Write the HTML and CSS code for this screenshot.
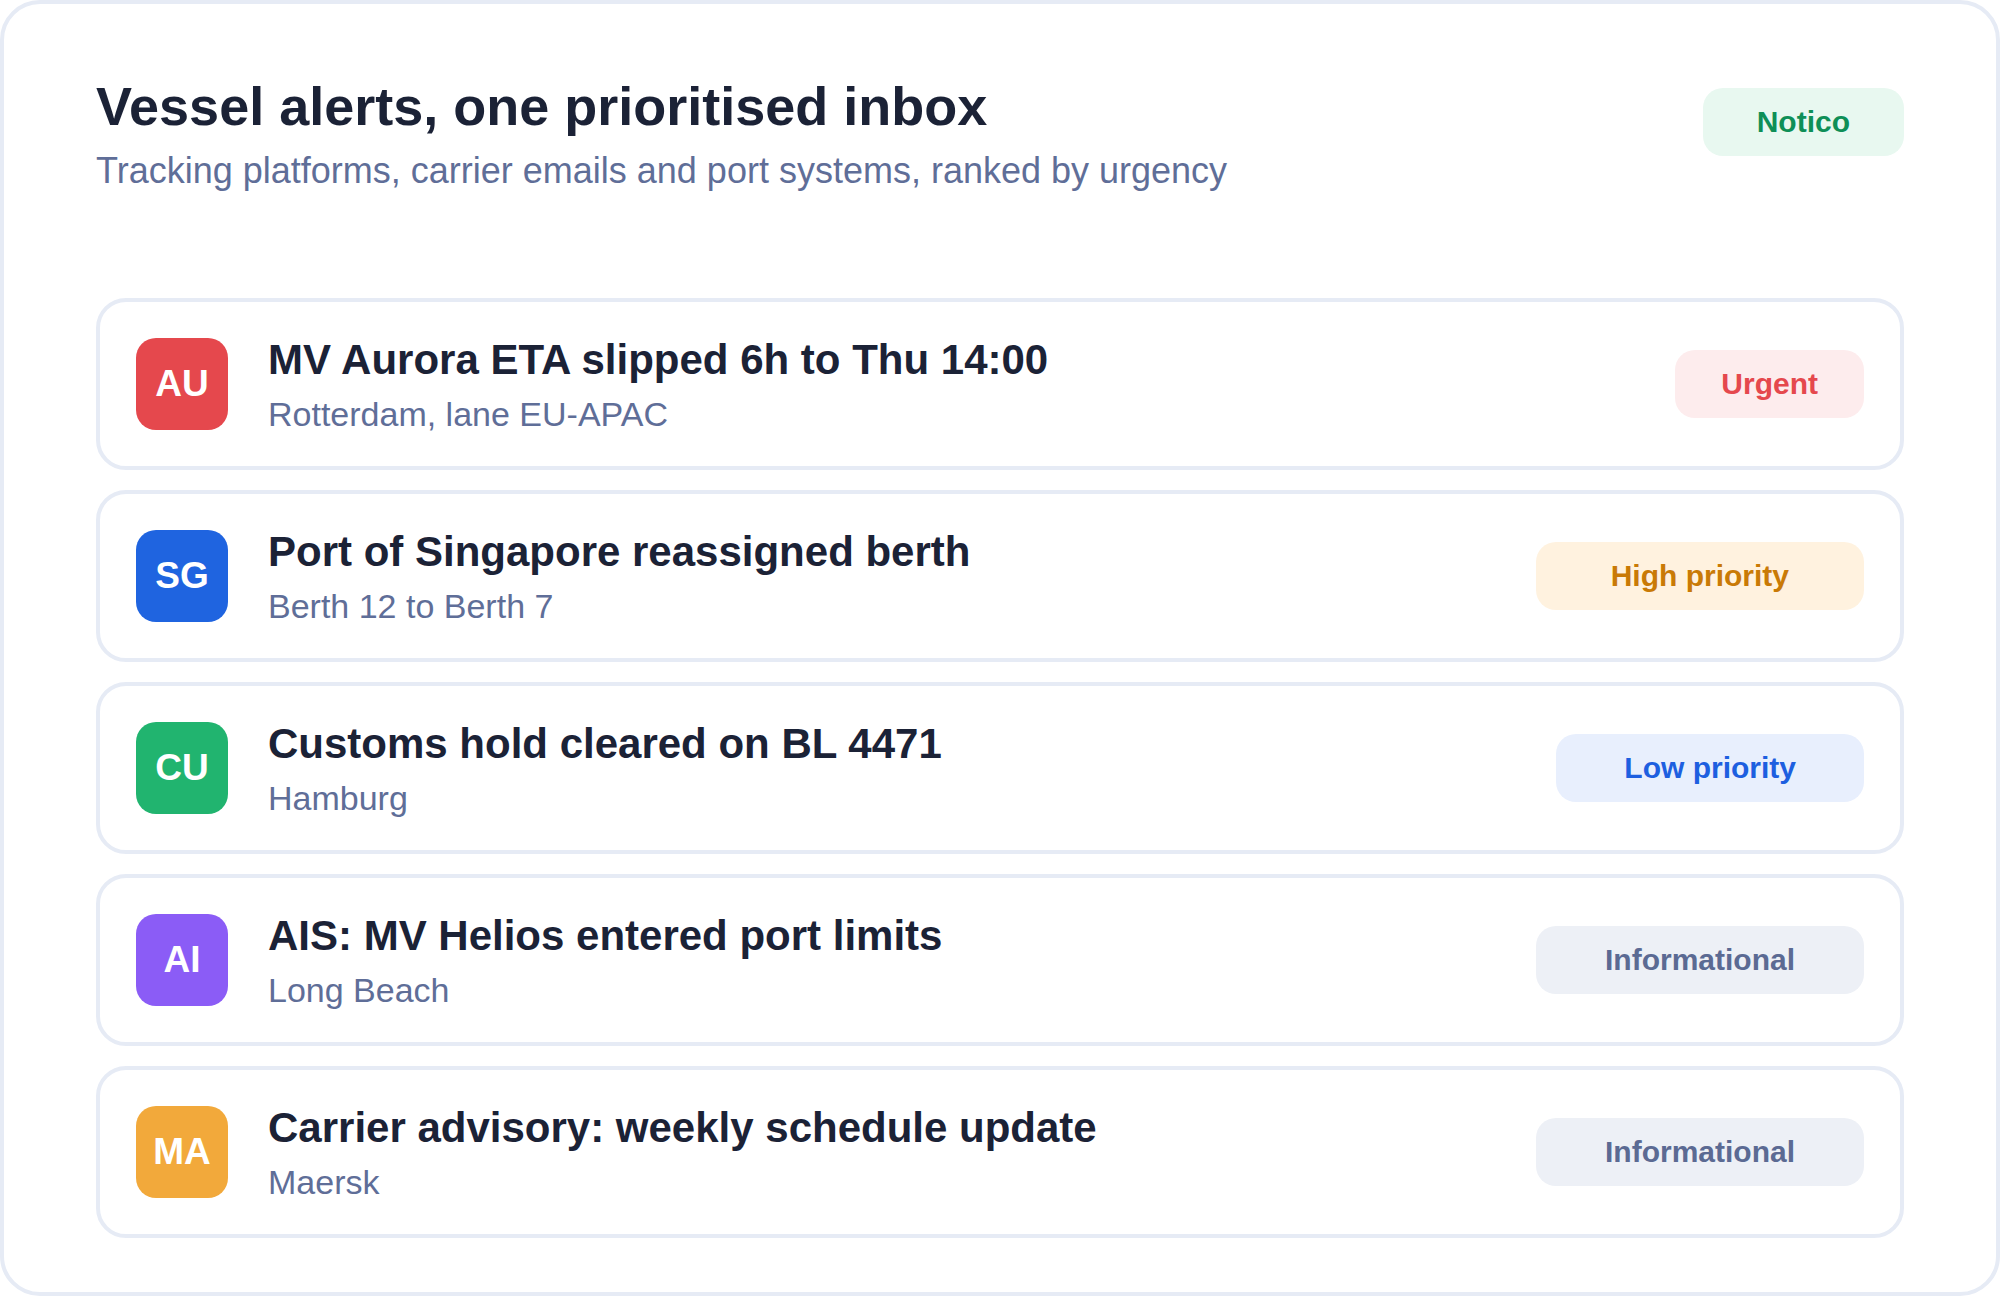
FILE: index.html
```html
<!DOCTYPE html>
<html lang="en">
<head>
  <meta charset="UTF-8">
  <title>Vessel alerts</title>
  <link rel="stylesheet" href="styles.css">
</head>
<body>
  <div class="panel">
    <div class="header">
      <div>
        <h1>Vessel alerts, one prioritised inbox</h1>
        <p class="subtitle">Tracking platforms, carrier emails and port systems, ranked by urgency</p>
      </div>
      <span class="brand">Notico</span>
    </div>

    <div class="alerts">
      <div class="alert">
        <div class="avatar red">AU</div>
        <div class="info">
          <div class="title">MV Aurora ETA slipped 6h to Thu 14:00</div>
          <div class="meta">Rotterdam, lane EU-APAC</div>
        </div>
        <span class="tag urgent">Urgent</span>
      </div>

      <div class="alert">
        <div class="avatar blue">SG</div>
        <div class="info">
          <div class="title">Port of Singapore reassigned berth</div>
          <div class="meta">Berth 12 to Berth 7</div>
        </div>
        <span class="tag high">High priority</span>
      </div>

      <div class="alert">
        <div class="avatar green">CU</div>
        <div class="info">
          <div class="title">Customs hold cleared on BL 4471</div>
          <div class="meta">Hamburg</div>
        </div>
        <span class="tag low">Low priority</span>
      </div>

      <div class="alert">
        <div class="avatar purple">AI</div>
        <div class="info">
          <div class="title">AIS: MV Helios entered port limits</div>
          <div class="meta">Long Beach</div>
        </div>
        <span class="tag fyi">Informational</span>
      </div>

      <div class="alert">
        <div class="avatar orange">MA</div>
        <div class="info">
          <div class="title">Carrier advisory: weekly schedule update</div>
          <div class="meta">Maersk</div>
        </div>
        <span class="tag fyi">Informational</span>
      </div>
    </div>
  </div>
</body>
</html>
```

FILE: styles.css
```css
* {
  box-sizing: border-box;
}
body {
  margin: 0;
  background: #fff;
  font-family: 'Liberation Sans', Arial, sans-serif;
  color: #1b2236;
}
.panel {
  width: 2000px;
  height: 1296px;
  border: 4px solid #e6ebf5;
  border-radius: 40px;
  padding: 70px 92px 0;
}
.header {
  display: flex;
  justify-content: space-between;
  align-items: flex-start;
}
h1 {
  margin: 0;
  font-size: 54px;
  line-height: 1.2;
  font-weight: bold;
  color: #1b2236;
}
.subtitle {
  margin: 10px 0 0;
  font-size: 36px;
  line-height: 1.2;
  color: #5f6e98;
}
.brand {
  margin-top: 14px;
  height: 68px;
  line-height: 68px;
  padding: 0 54px;
  border-radius: 20px;
  background: #e8f8f0;
  color: #0e8f57;
  font-size: 30px;
  font-weight: bold;
}
.alerts {
  margin-top: 106px;
  display: flex;
  flex-direction: column;
  gap: 20px;
}
.alert {
  display: flex;
  align-items: center;
  height: 172px;
  padding: 0 36px;
  border: 4px solid #e6ebf5;
  border-radius: 30px;
}
.avatar {
  width: 92px;
  height: 92px;
  flex-shrink: 0;
  border-radius: 20px;
  color: #fff;
  font-size: 37px;
  font-weight: bold;
  display: flex;
  align-items: center;
  justify-content: center;
}
.avatar.red { background: #e5484d; }
.avatar.blue { background: #1f64e0; }
.avatar.green { background: #21b46f; }
.avatar.purple { background: #8b5cf6; }
.avatar.orange { background: #f2a93b; }
.info {
  flex: 1;
  margin-left: 40px;
  padding-top: 2px;
}
.title {
  font-size: 42px;
  line-height: 1.2;
  font-weight: bold;
  color: #1b2236;
}
.meta {
  margin-top: 9px;
  font-size: 34px;
  line-height: 1.2;
  color: #5f6e98;
}
.tag {
  height: 68px;
  line-height: 68px;
  padding: 0 69px;
  border-radius: 20px;
  font-size: 30px;
  font-weight: bold;
  text-align: center;
}
.tag.urgent {
  padding: 0 46px;
  background: #fdeced;
  color: #e5484d;
}
.tag.high {
  padding: 0 75px;
  background: #fff2df;
  color: #c97a06;
}
.tag.low {
  padding: 0 68px;
  background: #e8effd;
  color: #1d5fe0;
}
.tag.fyi {
  background: #edf0f6;
  color: #5b6a93;
}
```
